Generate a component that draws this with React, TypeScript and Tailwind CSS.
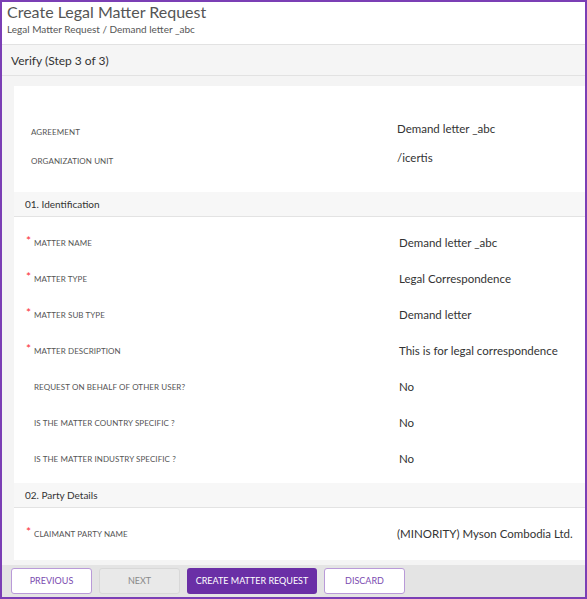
const font = { fontFamily: "Lato, 'Open Sans', sans-serif" };

type Row = { label: string; value: string; required?: boolean };

const identification: Row[] = [
  { label: "MATTER NAME", value: "Demand letter _abc", required: true },
  { label: "MATTER TYPE", value: "Legal Correspondence", required: true },
  { label: "MATTER SUB TYPE", value: "Demand letter", required: true },
  { label: "MATTER DESCRIPTION", value: "This is for legal correspondence", required: true },
  { label: "REQUEST ON BEHALF OF OTHER USER?", value: "No" },
  { label: "IS THE MATTER COUNTRY SPECIFIC ?", value: "No" },
  { label: "IS THE MATTER INDUSTRY SPECIFIC ?", value: "No" },
];

function FieldRow({ label, value, required }: Row) {
  return (
    <div className="flex h-[36px] items-center">
      <div className="flex w-[385px] items-center pl-[12px]">
        <span className="-mt-[4px] w-[8px] text-[12px] leading-none text-red-500">{required ? "*" : ""}</span>
        <span className="text-[8px] tracking-[0.01em] text-[#555]">{label}</span>
      </div>
      <span className="text-[11.5px] text-[#333]">{value}</span>
    </div>
  );
}

function SectionHeader({ title }: { title: string }) {
  return (
    <div className="flex h-[25px] items-center border-b border-[#e3e3e3] bg-[#f7f7f7] pl-[11px] text-[10px] text-[#333]">
      {title}
    </div>
  );
}

export default function App() {
  return (
    <div style={font} className="h-[599px] w-[587px] overflow-hidden border-2 border-[#7b3fb5] bg-[#f4f4f4]">
      <div className="flex h-full flex-col">
        <header className="h-[43px] border-b border-[#e2e2e2] bg-white px-[5px]">
          <h1 className="text-[16px] leading-[20px] text-[#555]">Create Legal Matter Request</h1>
          <p className="text-[10px] text-[#555]">Legal Matter Request / Demand letter _abc</p>
        </header>
        <div className="flex h-[31px] items-center border-b border-[#e2e2e2] bg-[#f5f5f5] pl-[9px] pt-[2px] text-[12px] text-[#333]">
          Verify (Step 3 of 3)
        </div>
        <div className="flex-1 overflow-hidden pl-[12px] pt-[10px]">
          <div className="bg-white">
            <div className="pb-[17px] pt-[31px]">
              <div className="flex h-[29px] items-center">
                <span className="w-[383px] pl-[17px] text-[8px] tracking-[0.01em] text-[#555]">AGREEMENT</span>
                <span className="-mt-[6px] text-[11.5px] text-[#333]">Demand letter _abc</span>
              </div>
              <div className="flex h-[29px] items-center">
                <span className="w-[383px] pl-[17px] text-[8px] tracking-[0.01em] text-[#555]">ORGANIZATION UNIT</span>
                <span className="-mt-[6px] text-[11.5px] text-[#333]">/icertis</span>
              </div>
            </div>
            <SectionHeader title="01. Identification" />
            <div className="pb-[6px] pt-[8px]">
              {identification.map((r) => (
                <FieldRow key={r.label} {...r} />
              ))}
            </div>
            <SectionHeader title="02. Party Details" />
            <div className="flex h-[52px] items-center">
              <div className="flex w-[383px] items-center pl-[12px]">
                <span className="-mt-[4px] w-[8px] text-[12px] leading-none text-red-500">*</span>
                <span className="text-[8px] tracking-[0.01em] text-[#555]">CLAIMANT PARTY NAME</span>
              </div>
              <span className="text-[11.5px] text-[#333]">(MINORITY) Myson Combodia Ltd.</span>
            </div>
          </div>
        </div>
        <footer className="flex h-[32px] items-center gap-[7px] bg-[#e4e4e4] pl-[9px]">
          <button className="h-[26px] w-[81px] rounded-[3px] border border-[#b99ad8] bg-white text-[9px] text-[#7b4bb0]">
            PREVIOUS
          </button>
          <button className="h-[26px] w-[81px] rounded-[3px] border border-[#d8d8d8] bg-[#e9e9e9] text-[9px] text-[#888]">
            NEXT
          </button>
          <button className="h-[26px] w-[130px] rounded-[3px] bg-[#6a2fa6] text-[9px] text-white">
            CREATE MATTER REQUEST
          </button>
          <button className="h-[26px] w-[81px] rounded-[3px] border border-[#b99ad8] bg-white text-[9px] text-[#7b4bb0]">
            DISCARD
          </button>
        </footer>
      </div>
    </div>
  );
}
